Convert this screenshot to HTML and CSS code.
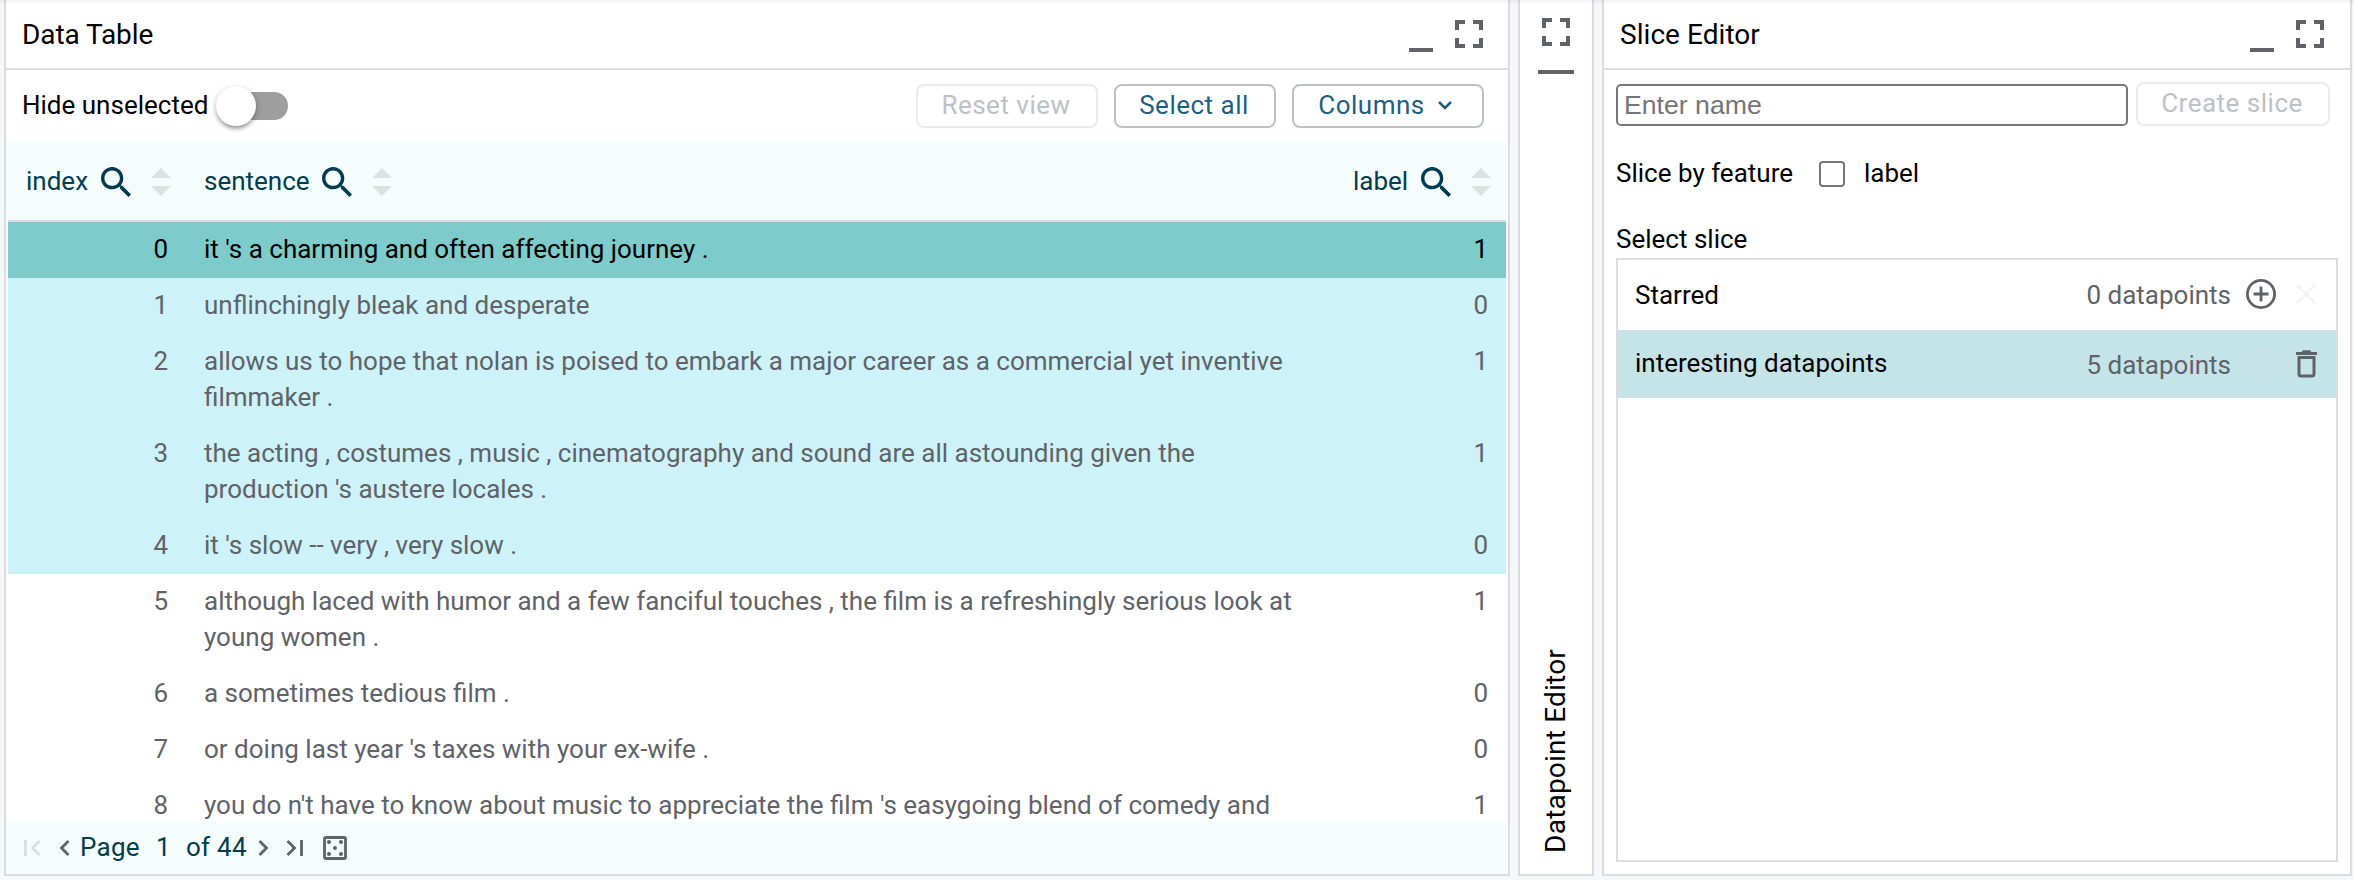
FILE: index.html
```html
<!DOCTYPE html>
<html lang="en">
<head>
<meta charset="utf-8">
<title>Data Table</title>
<link rel="stylesheet" href="styles.css">
</head>
<body>
<svg class="defs" width="0" height="0">
  <symbol id="full" viewBox="5 5 14 14"><path d="M7 14H5v5h5v-2H7v-3zM5 10h2V7h3V5H5v5zm12 7h-3v2h5v-5h-2v3zM14 5v2h3v3h2V5h-5z"/></symbol>
  <symbol id="search" viewBox="3 3 17.49 17.49"><path d="M15.5 14h-.79l-.28-.27C15.41 12.59 16 11.11 16 9.5 16 5.91 13.09 3 9.5 3S3 5.91 3 9.5 5.91 16 9.5 16c1.61 0 3.09-.59 4.23-1.57l.27.28v.79l5 4.99L20.49 19l-4.99-5zm-6 0C7.01 14 5 11.99 5 9.5S7.01 5 9.5 5 14 7.01 14 9.5 11.99 14 9.5 14z"/></symbol>
  <symbol id="sort" viewBox="0 0 20 28"><path d="M10 0L20 10H0zM0 18H20L10 28z"/></symbol>
</svg>
<main class="app">
  <section class="panel table-panel">
    <header class="panel-head"><h2>Data Table</h2><span class="minimize"></span><svg class="full"><use href="#full"/></svg></header>
    <div class="toolbar">
      <span class="toggle-label">Hide unselected</span>
      <span class="toggle"></span>
      <div class="buttons">
        <button class="btn reset" disabled>Reset view</button>
        <button class="btn select">Select all</button>
        <button class="btn columns">Columns<svg class="chev" viewBox="0 0 14 9"><path d="M1 1l6 6 6-6"/></svg></button>
      </div>
    </div>
    <div class="grid">
      <div class="thead">
        <div class="th"><span class="th-index">index</span><svg class="search"><use href="#search"/></svg><svg class="sort"><use href="#sort"/></svg></div>
        <div class="th"><span class="th-sentence">sentence</span><svg class="search"><use href="#search"/></svg><svg class="sort"><use href="#sort"/></svg></div>
        <div class="th th-last"><span>label</span><svg class="search"><use href="#search"/></svg><svg class="sort"><use href="#sort"/></svg></div>
      </div>
      <div class="tbody">
        <div class="row primary"><span class="num">0</span><span>it 's a charming and often affecting journey .</span><span class="num">1</span></div>
        <div class="row selected"><span class="num">1</span><span>unflinchingly bleak and desperate</span><span class="num">0</span></div>
        <div class="row selected"><span class="num">2</span><span>allows us to hope that nolan is poised to embark a major career as a commercial yet inventive<br>filmmaker .</span><span class="num">1</span></div>
        <div class="row selected"><span class="num">3</span><span>the acting , costumes , music , cinematography and sound are all astounding given the<br>production 's austere locales .</span><span class="num">1</span></div>
        <div class="row selected"><span class="num">4</span><span>it 's slow -- very , very slow .</span><span class="num">0</span></div>
        <div class="row"><span class="num">5</span><span>although laced with humor and a few fanciful touches , the film is a refreshingly serious look at<br>young women .</span><span class="num">1</span></div>
        <div class="row"><span class="num">6</span><span>a sometimes tedious film .</span><span class="num">0</span></div>
        <div class="row"><span class="num">7</span><span>or doing last year 's taxes with your ex-wife .</span><span class="num">0</span></div>
        <div class="row"><span class="num">8</span><span>you do n't have to know about music to appreciate the film 's easygoing blend of comedy and</span><span class="num">1</span></div>
      </div>
      <footer class="pager">
        <svg class="first" viewBox="0 0 17 16"><path d="M1.500 0v16M15.500 1L8.500 8l7 7"/></svg>
        <svg class="prev" viewBox="0 0 10 16"><path d="M8.500 1L1.500 8l7 7"/></svg>
        <span class="page">Page</span><span class="current">1</span><span class="total">of 44</span>
        <svg class="next" viewBox="0 0 10 16"><path d="M1.500 1l7 7-7 7"/></svg>
        <svg class="last" viewBox="0 0 17 16"><path d="M1.500 1l7 7-7 7M15.500 0v16"/></svg>
        <svg class="dice" viewBox="0 0 24 24"><rect x="1.500" y="1.500" width="21" height="21" rx="1.500"/><g><circle cx="6" cy="6" r="2"/><circle cx="18" cy="6" r="2"/><circle cx="12" cy="12" r="2"/><circle cx="6" cy="18" r="2"/><circle cx="18" cy="18" r="2"/></g></svg>
      </footer>
    </div>
  </section>

  <section class="panel collapsed">
    <svg class="full"><use href="#full"/></svg>
    <span class="bar"></span>
    <h2>Datapoint Editor</h2>
  </section>

  <section class="panel slice-panel">
    <header class="panel-head"><h2>Slice Editor</h2><span class="minimize"></span><svg class="full"><use href="#full"/></svg></header>
    <div class="slice-body">
      <div class="create"><input class="name" type="text" placeholder="Enter name"><button class="btn create-btn" disabled>Create slice</button></div>
      <div class="feature"><span class="feature-title">Slice by feature</span><span class="check"></span><span>label</span></div>
      <div class="select-title">Select slice</div>
      <div class="list">
        <div class="item starred"><span class="item-name">Starred</span><span class="count">0 datapoints</span>
          <svg class="plus" viewBox="0 0 30 30"><circle cx="15" cy="15" r="13.600"/><path d="M15 7.500v15M7.500 15h15"/></svg>
          <svg class="clear" viewBox="0 0 20 20"><path d="M1 1l18 18M19 1L1 19"/></svg></div>
        <div class="item active"><span class="item-name">interesting datapoints</span><span class="count">5 datapoints</span>
          <svg class="plus" viewBox="0 0 30 30"><circle cx="15" cy="15" r="13.600"/><path d="M15 7.500v15M7.500 15h15"/></svg>
          <svg class="trash" viewBox="0 0 21 28"><path d="M0 2h5.500L7 .3h7L15.500 2H21v3H0z"/><path class="can" d="M3 7.500h15V24q0 2-2 2H5q-2 0-2-2z"/></svg></div>
      </div>
    </div>
  </section>
</main>
</body>
</html>
```
FILE: styles.css
```css
* { box-sizing: border-box; }
body { margin: 0; background: #f5f8f9; font: 26px/36px Roboto, sans-serif; color: #000; }
.defs { display: block; position: absolute; }
svg { display: block; flex: none; fill: #5f6368; overflow: visible; }
.app { display: flex; width: 2354px; height: 880px; padding: 0 2px 4px 4px; overflow: hidden; background: #f5f8f9; }
.app::before { content: ""; position: absolute; left: 0; top: 0; width: 2354px; height: 5px; background: linear-gradient(rgba(0,0,0,.05), rgba(0,0,0,0)); }
.panel { display: flex; flex-direction: column; background: #fff; border: 2px solid #dadce0; border-top: 0; }
.table-panel { width: 1506px; margin-right: 8px; }
.collapsed { width: 76px; margin-right: 8px; align-items: center; padding-top: 18px; }
.slice-panel { width: 750px; }
.panel-head { display: flex; height: 70px; flex: none; border-bottom: 2px solid #dadce0; padding: 0 25px 0 16px; align-items: flex-start; }
.slice-panel .panel-head { padding-right: 26px; }
h2 { margin: 0; font-size: 28px; line-height: 36px; font-weight: 400; letter-spacing: -.1px; }
.panel-head h2 { margin: 17px auto 0 0; }
.slice-panel h2 { letter-spacing: .05px; }
.full { width: 28px; height: 28px; }
.panel-head .full { margin-top: 20px; }
.minimize { width: 24px; height: 4px; background: #5f6368; margin: 48px 22px 0 0; }

.toolbar { display: flex; height: 72px; flex: none; align-items: center; padding: 0 24px 0 16px; }
.toggle-label { width: 194px; padding-bottom: 2px; }
.toggle { width: 72px; height: 28px; border-radius: 14px; background: linear-gradient(90deg, transparent 20px, #9e9e9e 20px); display: flex; align-items: center; }
.toggle::before { content: ""; width: 40px; height: 40px; border-radius: 50%; background: #fff; box-shadow: 0 4px 4px -2px rgba(0,0,0,.25), 0 2px 4px rgba(0,0,0,.18), 0 2px 8px rgba(0,0,0,.12); }
.buttons { display: flex; gap: 16px; margin-left: auto; }
.btn { display: flex; align-items: center; justify-content: center; height: 44px; padding: 0 2px 2px 0; font: 26px/36px Roboto, sans-serif; letter-spacing: .5px; border: 2px solid #bdc1c6; border-radius: 8px; background: #fff; color: #1f5f7f; }
.btn:disabled { color: #bdc1c6; border-color: #e8eaed; }
.reset { width: 182px; }
.select { width: 162px; }
.columns { width: 192px; padding-right: 6px; }
.chev { width: 14px; height: 9px; margin-left: 13px; fill: none; stroke: #1f5f7f; stroke-width: 2.6; }

.grid { display: flex; flex-direction: column; flex: 1; min-height: 0; padding: 0 2px; }
.thead, .row { display: grid; grid-template-columns: 196px 1fr 120px; }
.thead { height: 80px; flex: none; background: #f4fcfc; border-bottom: 2px solid #dadce0; color: #003c4d; grid-template-columns: 196px 1fr auto; }
.th { display: flex; align-items: center; }
.th:first-child { padding-left: 18px; }
.th .search { width: 30px; height: 30px; margin: 1px 20px 0 0; fill: #003c4d; }
.th .sort { width: 20px; height: 28px; margin-top: 1px; fill: #dde2e1; }
.th-index { width: 75px; }
.th-sentence { width: 118px; }
.th-last { padding-right: 15px; }
.th-last span { width: 68px; }
.tbody { flex: 1; min-height: 0; overflow: hidden; color: #5f6368; }
.row { padding: 9px 18px 11px 0; white-space: nowrap; }
.row .num { text-align: right; }
.row .num:first-child { padding-right: 36px; }
.primary { background: #7dcbca; color: #000; }
.selected { background: #cdf2fa; }
.pager { height: 52px; flex: none; display: flex; align-items: center; background: #f4fcfc; padding-left: 16px; color: #003c4d; }
.pager span { padding-bottom: 2px; }
.pager svg { fill: none; stroke: #5f6368; stroke-width: 2.8; height: 16px; }
.pager .first { width: 17px; stroke: #dadce0; margin-right: 19px; }
.pager .prev { width: 10px; margin-right: 10px; }
.page { width: 76px; letter-spacing: .25px; }
.current { width: 30px; }
.total { width: 72px; letter-spacing: .25px; }
.pager .next { width: 10px; margin-right: 18px; }
.pager .last { width: 17px; margin-right: 20px; }
.pager .dice { width: 24px; height: 24px; }
.dice g { fill: #5f6368; stroke: none; }

.bar { width: 36px; height: 4px; background: #5f6368; margin-top: 24px; }
.collapsed h2 { writing-mode: vertical-rl; transform: rotate(180deg); margin: auto 0 21px; letter-spacing: .2px; }

.slice-body { flex: 1; display: flex; flex-direction: column; padding: 12px 12px 12px; }
.create { display: flex; align-items: flex-start; }
.name { width: 512px; height: 42px; margin: 2px 8px 0 0; padding: 0 6px; border: 2px solid #767676; border-radius: 5px; font: 26.67px/36px "Liberation Sans", Arial, sans-serif; }
.name::placeholder { color: #757575; }
.create-btn { width: 194px; }
.feature { display: flex; align-items: center; height: 36px; margin-top: 29px; }
.feature-title { width: 203px; }
.check { width: 26px; height: 26px; border: 2px solid #767676; border-radius: 4px; margin: 1px 19px 0 0; }
.select-title { margin: 30px 0 1px; }
.list { flex: 1; border: 2px solid #dadce0; }
.item { display: flex; align-items: center; padding: 0 20px 0 17px; }
.starred { height: 70px; }
.active { height: 68px; padding-right: 19px; background: #c5e4e7; }
.item-name { margin-right: auto; }
.active .item-name { padding-bottom: 2px; }
.count { color: #5f6368; margin-right: 15px; }
.active .count { padding-top: 1px; }
.plus { width: 30px; height: 30px; margin-right: 20px; fill: none; stroke: #5f6368; stroke-width: 2.8; }
.starred .plus, .clear { margin-bottom: 2px; }
.active .plus { stroke: #c8e2e6; }
.clear { width: 20px; height: 20px; fill: none; stroke: #f3f3f4; stroke-width: 2.6; }
.trash { width: 21px; height: 28px; }
.can { fill: none; stroke: #5f6368; stroke-width: 3; }
```
